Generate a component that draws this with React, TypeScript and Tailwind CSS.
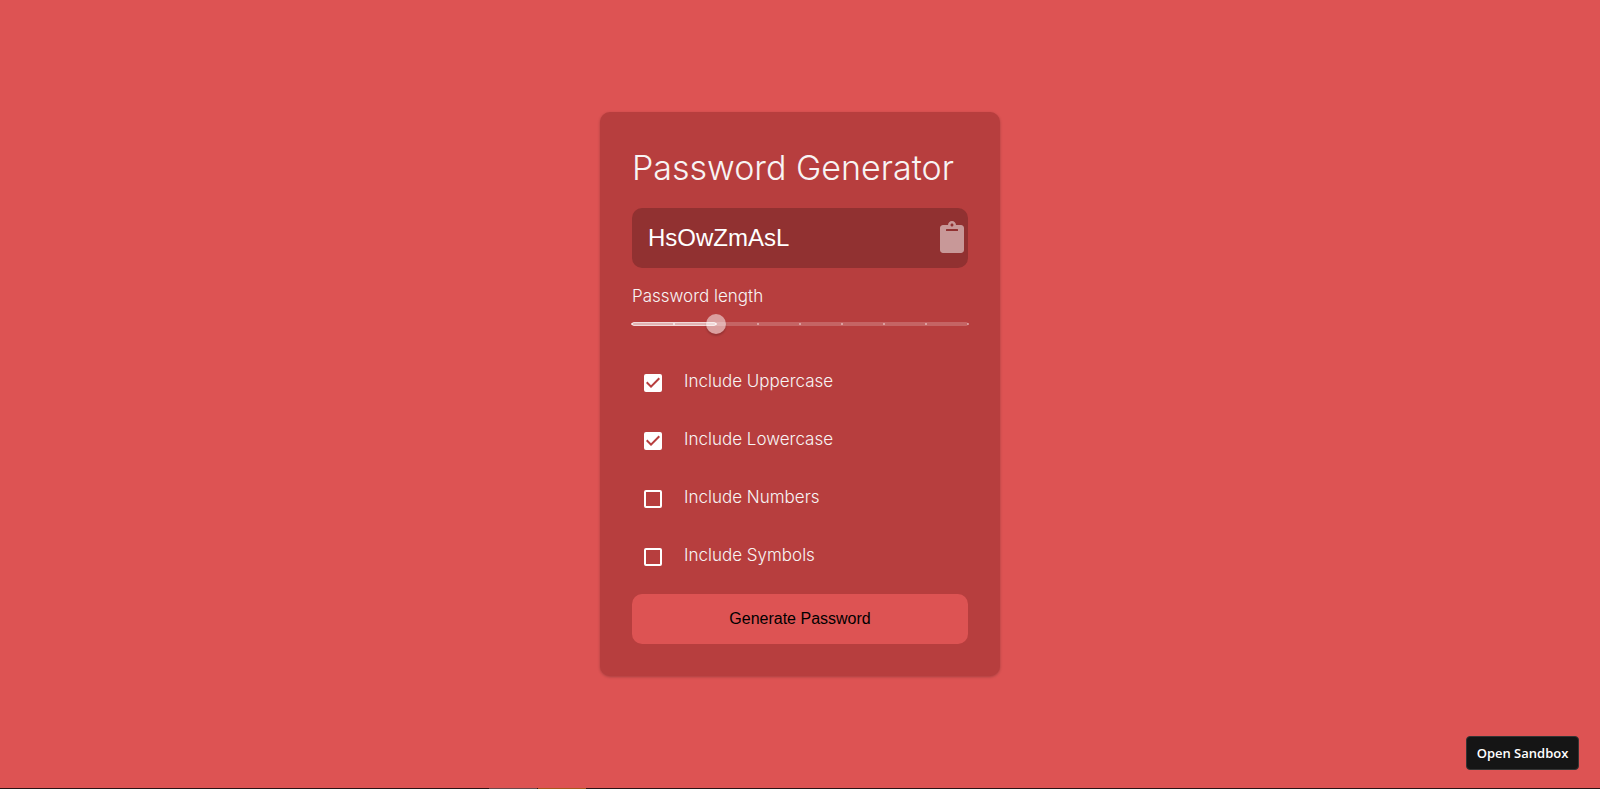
import { useState } from "react";
import { FaClipboard } from "react-icons/fa";

const MIN = 6;
const MAX = 14;
const CHARSETS = {
  Uppercase: "ABCDEFGHIJKLMNOPQRSTUVWXYZ",
  Lowercase: "abcdefghijklmnopqrstuvwxyz",
  Numbers: "0123456789",
  Symbols: "!@#$%^&*()<>,.?/[]{}-=_+|",
};
type Kind = keyof typeof CHARSETS;
const KINDS = Object.keys(CHARSETS) as Kind[];

function LengthSlider({ value, onChange }: { value: number; onChange: (n: number) => void }) {
  const percent = ((value - MIN) / (MAX - MIN)) * 100;
  const steps = Array.from({ length: MAX - MIN + 1 }, (_, i) => MIN + i);
  return (
    <div className="relative h-5">
      <div className="absolute inset-x-0 top-2 h-1 rounded-full bg-white/20" />
      <div
        className="absolute left-0 top-2 h-1 rounded-full border border-white/50 bg-white/50"
        style={{ width: `${percent}%` }}
      />
      <span
        className="absolute top-0 size-5 -translate-x-1/2 rounded-full bg-white/50 shadow-[0_2px_2px_rgba(0,0,0,0.18)]"
        style={{ left: `${percent}%` }}
      />
      {steps.map((step) => (
        <span
          key={step}
          className={`absolute top-[9px] size-0.5 -translate-x-1/2 rounded-[1px] ${
            step <= value ? "bg-white/80" : "bg-white/50"
          }`}
          style={{ left: `${((step - MIN) / (MAX - MIN)) * 100}%` }}
        />
      ))}
      <input
        id="length"
        type="range"
        min={MIN}
        max={MAX}
        value={value}
        onChange={(e) => onChange(Number(e.target.value))}
        className="absolute inset-0 w-full cursor-pointer opacity-0"
      />
    </div>
  );
}

function Option({ kind, checked, onToggle }: { kind: Kind; checked: boolean; onToggle: () => void }) {
  const id = `include-${kind.toLowerCase()}`;
  return (
    <div className="flex h-[58px] items-center gap-[22px] pl-3">
      <span className="grid size-[18px] place-items-center">
        <input
          id={id}
          type="checkbox"
          checked={checked}
          onChange={onToggle}
          className="peer col-start-1 row-start-1 size-[18px] cursor-pointer appearance-none rounded-[2px] border-2 border-white checked:bg-white"
        />
        <svg
          viewBox="3 3 18 18"
          aria-hidden="true"
          className="pointer-events-none invisible col-start-1 row-start-1 size-[18px] fill-[#b73e3e] peer-checked:visible"
        >
          <path d="M10 17l-5-5 1.41-1.41L10 14.17l7.59-7.59L19 8z" />
        </svg>
      </span>
      <label htmlFor={id} className="cursor-pointer pb-1 text-[17px] leading-6">
        Include {kind}
      </label>
    </div>
  );
}

export default function App() {
  const [password, setPassword] = useState("HsOwZmAsL");
  const [length, setLength] = useState(8);
  const [enabled, setEnabled] = useState<Record<Kind, boolean>>({
    Uppercase: true,
    Lowercase: true,
    Numbers: false,
    Symbols: false,
  });

  const generate = () => {
    const pool = KINDS.filter((k) => enabled[k]).map((k) => CHARSETS[k]).join("");
    if (!pool) return;
    setPassword(Array.from({ length }, () => pool[Math.floor(Math.random() * pool.length)]).join(""));
  };

  return (
    <div className="flex min-h-screen flex-col bg-[#dd5353] font-['Inter',sans-serif] font-light text-[#f8f4f4]">
      <main className="flex flex-1 items-center justify-center">
        <section className="w-full max-w-[400px] rounded-[10px] bg-[#b73e3e] p-8 shadow-[0_1px_3px_rgba(0,0,0,0.24)]">
          <h1 className="text-[34px] leading-12 whitespace-nowrap">Password Generator</h1>
          <div className="mt-4 flex h-15 items-center rounded-[10px] bg-[#913131] pl-4">
            <input
              type="text"
              readOnly
              aria-label="Generated password"
              value={password}
              className="min-w-0 flex-1 bg-transparent font-['Liberation_Sans',sans-serif] text-2xl font-normal text-white outline-none"
            />
            <button
              type="button"
              aria-label="Copy password"
              onClick={() => navigator.clipboard?.writeText(password)}
              className="cursor-pointer pb-0.5 text-[32px] text-white/50"
            >
              <FaClipboard />
            </button>
          </div>
          <label htmlFor="length" className="mt-4 mb-1.5 block text-[17px] leading-6">
            Password length
          </label>
          <LengthSlider value={length} onChange={setLength} />
          <div className="mt-5">
            {KINDS.map((kind) => (
              <Option
                key={kind}
                kind={kind}
                checked={enabled[kind]}
                onToggle={() => setEnabled({ ...enabled, [kind]: !enabled[kind] })}
              />
            ))}
          </div>
          <button
            type="button"
            onClick={generate}
            className="mt-2 h-[50px] w-full cursor-pointer rounded-[10px] bg-[#dd5353] font-['Liberation_Sans',sans-serif] font-normal text-black"
          >
            Generate Password
          </button>
        </section>
      </main>
      <footer className="flex h-px bg-[#2b1416]">
        <span className="ml-[489px] w-12 bg-[#6b4a4c]" />
        <span className="ml-px w-12 bg-[#a8581f]" />
      </footer>
      <button
        type="button"
        className="fixed right-[21px] bottom-[19px] h-[34px] w-[113px] cursor-pointer rounded-[4px] border border-[#343434] bg-[#151515] pt-0.5 font-['Open_Sans',sans-serif] text-[13px] font-semibold text-white"
      >
        Open Sandbox
      </button>
    </div>
  );
}
